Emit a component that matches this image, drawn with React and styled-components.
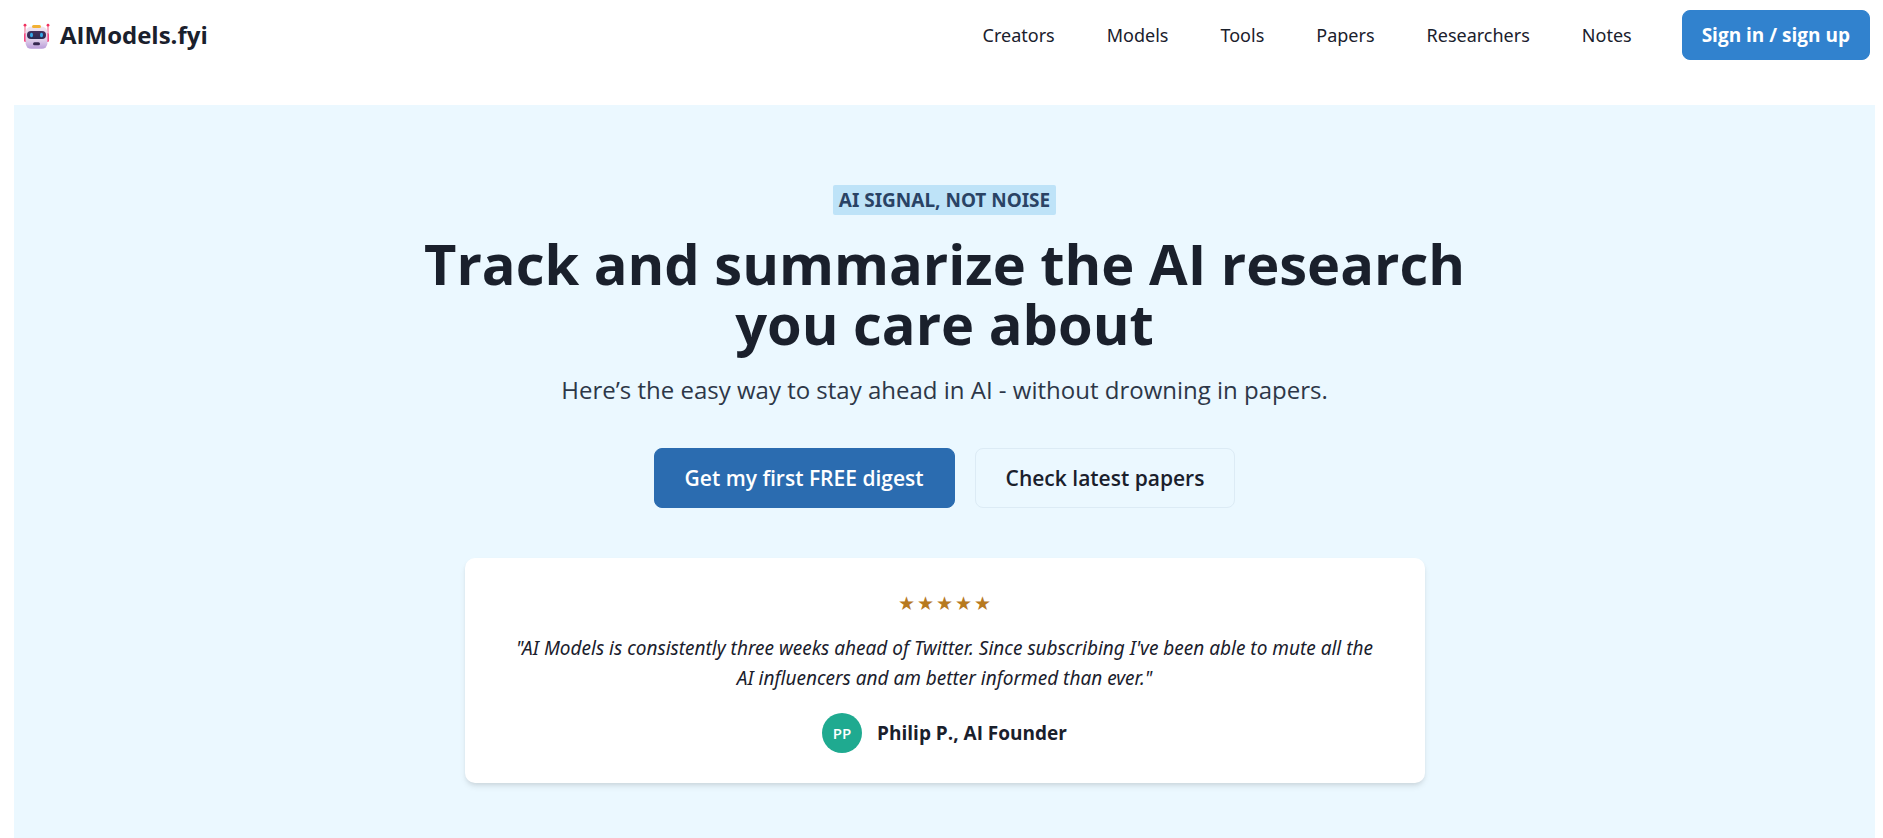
import React from "react";
import styled, { createGlobalStyle } from "styled-components";

const GlobalStyle = createGlobalStyle`
  *, *::before, *::after { box-sizing: border-box; }
  body {
    margin: 0;
    background: #ffffff;
    color: #1a202c;
    font-family: "Open Sans", "Noto Sans", sans-serif;
    font-size: 19px;
    line-height: 30px;
  }
  h1, p, blockquote, figure, ul { margin: 0; padding: 0; }
  a { color: inherit; text-decoration: none; }
  button { font: inherit; cursor: pointer; }
`;

const Page = styled.div`
  display: flex;
  flex-direction: column;
  min-height: 100vh;
`;

const Header = styled.header`
  display: flex;
  align-items: center;
  justify-content: space-between;
  padding: 10px 13px 10px 23px;
  margin-bottom: 35px;
`;

const Brand = styled.a`
  display: flex;
  align-items: center;
  gap: 10px;
  font-size: 24px;
  font-weight: 700;
`;

const Nav = styled.nav`
  display: flex;
  align-items: center;
  gap: 50px;
`;

const NavList = styled.ul`
  display: flex;
  gap: 52px;
  list-style: none;
  font-family: "Noto Sans", sans-serif;
  font-size: 18px;
`;

const Button = styled.button`
  height: ${(p) => (p.$large ? 60 : 50)}px;
  padding: 0 ${(p) => (p.$large ? 30 : 19)}px;
  border: 1px solid ${(p) => p.$border || p.$bg};
  border-radius: 8px;
  background: ${(p) => p.$bg};
  color: ${(p) => p.$color || "#ffffff"};
  font-size: ${(p) => (p.$large ? 21 : 19)}px;
  font-weight: ${(p) => (p.$large ? 600 : 700)};
`;

const Hero = styled.main`
  flex: 1;
  display: flex;
  flex-direction: column;
  align-items: center;
  margin: 0 8px 0 14px;
  padding: 80px 20px 54px;
  background: #ebf8ff;
  text-align: center;
`;

const Tag = styled.p`
  padding: 0 6px;
  border-radius: 2px;
  background: #bee3f8;
  color: #2a4365;
  font-family: "Noto Sans", sans-serif;
  font-weight: 700;
  text-transform: uppercase;
`;

const Title = styled.h1`
  max-width: 1120px;
  margin-top: 18px;
  font-size: 56px;
  font-weight: 700;
  line-height: 60px;
`;

const Subtitle = styled.p`
  margin-top: 18px;
  color: #2d3748;
  font-size: 24px;
  line-height: 38px;
`;

const Actions = styled.div`
  display: flex;
  gap: 20px;
  margin-top: 39px;
`;

const Card = styled.figure`
  width: 100%;
  max-width: 960px;
  margin-top: 50px;
  padding: 30px;
  border-radius: 10px;
  background: #ffffff;
  box-shadow: 0 4px 6px -1px rgba(0, 0, 0, 0.1), 0 2px 4px -1px rgba(0, 0, 0, 0.06);
`;

const Stars = styled.div`
  display: flex;
  justify-content: center;
  gap: 2px;
  color: #b7791f;
  font-family: "DejaVu Sans", sans-serif;
  font-size: 19px;
`;

const Quote = styled.blockquote`
  margin-top: 15px;
  padding: 0 15px;
  font-family: "Noto Sans", sans-serif;
  font-style: italic;
`;

const Author = styled.figcaption`
  display: flex;
  align-items: center;
  justify-content: center;
  gap: 15px;
  margin-top: 20px;
  font-weight: 700;
`;

const Avatar = styled.span`
  width: 40px;
  height: 40px;
  border-radius: 50%;
  background: #1faa90;
  color: #ffffff;
  font-size: 15px;
  font-weight: 600;
  line-height: 40px;
`;

const links = ["Creators", "Models", "Tools", "Papers", "Researchers", "Notes"];

function RobotLogo() {
  return (
    <svg width="27" height="27" viewBox="0 -1 27 27" aria-hidden="true">
      <defs>
        <linearGradient id="face" x1="0" y1="0" x2="0" y2="1">
          <stop offset="0" stopColor="#efe4f0" />
          <stop offset="0.6" stopColor="#dfd0ea" />
          <stop offset="1" stopColor="#b99bd8" />
        </linearGradient>
        <linearGradient id="visor" x1="0" y1="0" x2="0" y2="1">
          <stop offset="0" stopColor="#43305c" />
          <stop offset="1" stopColor="#2b2a52" />
        </linearGradient>
      </defs>
      <path d="M2 2v11M25 2v11" stroke="#f58aa8" strokeWidth="1.4" />
      <circle cx="2" cy="2.2" r="1.4" fill="#f0325f" />
      <circle cx="25" cy="2.2" r="1.4" fill="#f0325f" />
      <rect x="1" y="10" width="4" height="9" rx="1.5" fill="#f5487f" />
      <rect x="22" y="10" width="4" height="9" rx="1.5" fill="#f5487f" />
      <rect x="2.6" y="3.6" width="21.8" height="22.2" rx="5.5" fill="url(#face)" />
      <rect x="9" y="2" width="9" height="3" rx="1.5" fill="#f2b134" />
      <rect x="4" y="8" width="19" height="8" rx="4" fill="url(#visor)" />
      <ellipse cx="8.5" cy="12" rx="1.5" ry="2.2" fill="#35a8e8" />
      <ellipse cx="18.5" cy="12" rx="1.5" ry="2.2" fill="#35a8e8" />
      <rect x="10" y="19.2" width="7" height="3" rx="1.5" fill="#35284f" />
    </svg>
  );
}

export default function App() {
  return (
    <Page>
      <GlobalStyle />
      <Header>
        <Brand href="#">
          <RobotLogo />
          AIModels.fyi
        </Brand>
        <Nav>
          <NavList>
            {links.map((label) => (
              <li key={label}>
                <a href="#">{label}</a>
              </li>
            ))}
          </NavList>
          <Button type="button" $bg="#3182ce">Sign in / sign up</Button>
        </Nav>
      </Header>
      <Hero>
        <Tag>AI signal, not noise</Tag>
        <Title>Track and summarize the AI research you care about</Title>
        <Subtitle>Here’s the easy way to stay ahead in AI - without drowning in papers.</Subtitle>
        <Actions>
          <Button type="button" $large $bg="#2b6cb0">Get my first FREE digest</Button>
          <Button type="button" $large $bg="transparent" $border="#dcebf5" $color="#1a202c">
            Check latest papers
          </Button>
        </Actions>
        <Card>
          <Stars role="img" aria-label="5 out of 5 stars">
            {[1, 2, 3, 4, 5].map((n) => (
              <span key={n}>★</span>
            ))}
          </Stars>
          <Quote>
            "AI Models is consistently three weeks ahead of Twitter. Since subscribing I've been able
            to mute all the AI influencers and am better informed than ever."
          </Quote>
          <Author>
            <Avatar>PP</Avatar>
            Philip P., AI Founder
          </Author>
        </Card>
      </Hero>
    </Page>
  );
}
